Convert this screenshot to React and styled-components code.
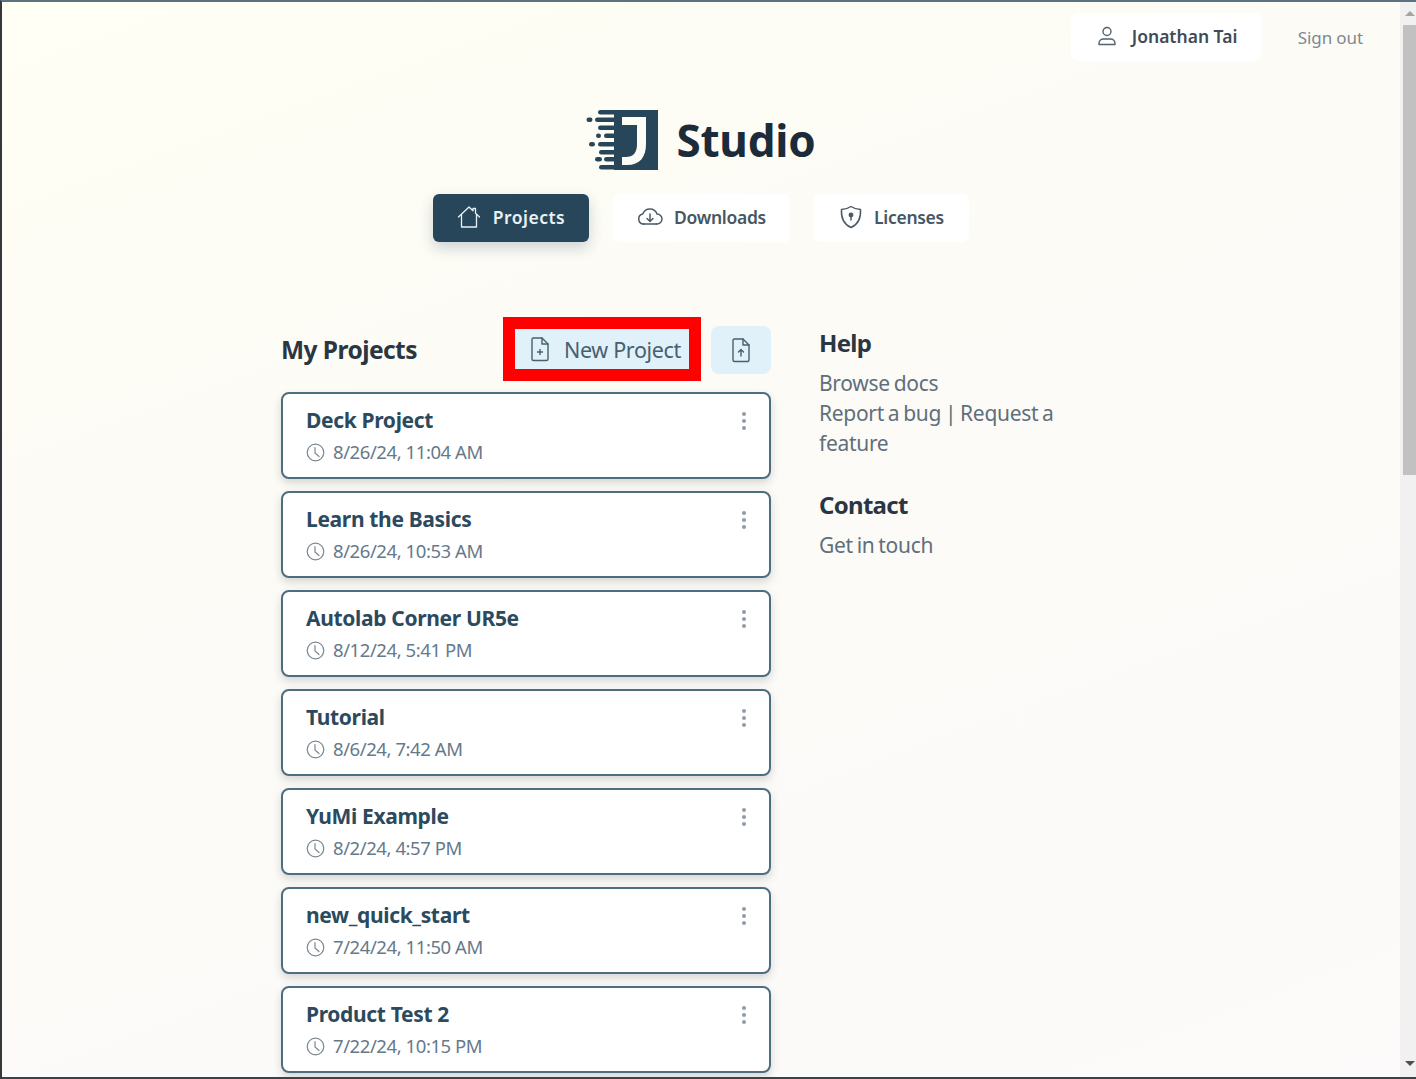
import React from "react";
import styled, { createGlobalStyle } from "styled-components";

const Global = createGlobalStyle`
  html, body { margin: 0; padding: 0; height: 100%; overflow: hidden; }
  body { font-family: "Noto Sans", "Open Sans", sans-serif; }
  * { box-sizing: border-box; }
`;
const Frame = styled.div`
  width: 1416px; height: 1079px; display: flex; overflow: hidden;
  border-top: 2px solid #5d7280; border-bottom: 2px solid #3c4246; border-left: 2px solid #33383b;
`;
const Page = styled.main`
  flex: 1; min-width: 0; overflow: hidden;
  background: linear-gradient(160deg, #fffff4 0%, #fcfbf6 35%, #fcfafa 100%);
`;
const Scrollbar = styled.div`
  width: 16px; background: #f1f1f1; display: flex; flex-direction: column; align-items: center; padding-left: 3px;
`;
const Arrow = styled.div`
  height: ${p => p.$down ? "21px" : "23px"}; width: 100%; display: flex; align-items: center; justify-content: center;
  &::before { content: ""; border-left: 5px solid transparent; border-right: 5px solid transparent;
    ${p => p.$down ? "border-top: 5px solid #505050; margin-bottom: 6px;" : "border-bottom: 5px solid #a3a3a3;"} }
`;
const Thumb = styled.div` width: 100%; height: 450px; background: #c1c1c1; `;
const Spacer = styled.div` flex: 1; `;
const TopBar = styled.header`
  display: flex; justify-content: flex-end; align-items: center; gap: 36px;
  padding: 10px 37px 0 0; height: 60px;
`;
const UserChip = styled.div`
  width: 191px; height: 48px; background: #fff; border-radius: 6px; display: flex; align-items: center; gap: 15px;
  padding: 0 0 2px 26px; color: #3f4b57; font-size: 17.5px; font-weight: 600; letter-spacing: 0;
`;
const SignOut = styled.a` color: #7c8894; font-size: 17px; letter-spacing: -0.1px; `;
const Brand = styled.div`
  display: flex; align-items: center; justify-content: center; gap: 16px; margin-top: 47px; height: 62px;
`;
const BrandName = styled.h1`
  margin: 0; color: #1c2b3a; font-size: 44px; font-weight: 700; letter-spacing: -0.2px; line-height: 62px;
`;
const Nav = styled.nav`
  display: flex; justify-content: center; gap: 24px; margin-top: 23px;
`;
const NavButton = styled.a`
  height: 48px; width: ${p => p.$w}px; border-radius: 6px; display: flex; align-items: center; justify-content: center; gap: ${p => p.$active ? 12 : 11}px;
  padding-bottom: 2px; font-size: 17.5px; font-weight: 600; letter-spacing: ${p => p.$active ? "0.5px" : "-0.3px"};
  background: ${p => p.$active ? "#27465a" : "#fff"}; color: ${p => p.$active ? "#e9f1f7" : "#465663"};
  box-shadow: ${p => p.$active ? "0 6px 14px rgba(39,70,90,.22)" : "none"};
`;
const Content = styled.div`
  display: grid; grid-template-columns: 490px 240px; column-gap: 48px; margin: 76px 0 0 279px;
`;
const Head = styled.div`
  display: flex; align-items: center; height: 74px; padding-bottom: 12px;
`;
const HeadTitle = styled.h2`
  margin: 0; color: #2a3642; font-size: 24.5px; font-weight: 700; letter-spacing: -0.55px; flex: 1;
`;
const NewButton = styled.button`
  width: 174px; height: 40px; border: none; padding: 0 0 0 14px; margin-right: 22px; background: #e0f1f9; display: flex; align-items: center; gap: 13px;
  color: #47606f; font: 400 21.5px "Noto Sans", sans-serif; letter-spacing: -0.35px;
  outline: 12px solid #ff0000;
`;
const UploadButton = styled.button`
  width: 60px; height: 48px; margin-top: 2px; border: none; border-radius: 8px; background: #e0f1f9; display: flex; align-items: center; justify-content: center; padding: 0;
`;
const List = styled.div` display: flex; flex-direction: column; gap: 12px; `;
const Card = styled.article`
  height: 87px; background: #fff; border: 2px solid #4d6d80; border-radius: 8px; position: relative;
  padding: 12px 0 0 23px; box-shadow: 0 4px 8px rgba(60,70,70,.2);
`;
const CardTitle = styled.div`
  color: #2c4a5e; font-size: 21px; font-weight: 700; letter-spacing: -0.34px; line-height: 29px;
`;
const CardDate = styled.div`
  display: flex; align-items: center; gap: 8px; margin-top: 2px; color: #66798a; font-size: 18.5px; letter-spacing: -0.43px; line-height: 29px;
  & svg { margin-top: 2px; }
`;
const Kebab = styled.span`
  position: absolute; right: 23px; top: 18px; display: flex; flex-direction: column; gap: 3px;
  & i { display: block; width: 4px; height: 4px; border-radius: 50%; background: #929ca6; }
`;
const Side = styled.aside` padding-top: 9px; `;
const SideTitle = styled.h3`
  margin: 0; color: #2a3642; font-size: 24px; font-weight: 700; letter-spacing: -0.7px; line-height: 32px;
  margin-top: ${p => p.$gap || 0}px;
`;
const SideText = styled.p`
  margin: 9px 0 0; color: #5f6f7b; font-size: 21px; line-height: 30px; letter-spacing: -0.3px; word-spacing: -1.3px;
`;

const Stroke = styled.svg` flex: none; display: block; `;

const HomeIcon = () => (
  <Stroke width="24" height="24" viewBox="0 0 24 24" fill="none" stroke="currentColor" strokeWidth="1.3" strokeLinejoin="round" strokeLinecap="round">
    <path d="M1.5 12 12 2l4 3.8V3.5h2.500v4.700l4 3.800" /><path d="M4.5 9.500V22h15V9.500" />
  </Stroke>
);
const CloudIcon = () => (
  <Stroke width="26" height="24" viewBox="0 0 26 24" fill="none" stroke="#4d5a65" strokeWidth="1.5" strokeLinecap="round" strokeLinejoin="round">
    <path d="M7 19H6.500a5 5 0 0 1-.7-9.900A7.500 7.500 0 0 1 20 9a5 5 0 0 1 0 10h-1" />
    <path d="M6.500 19h13" /><path d="M13 9v7M10 13.500l3 3 3-3" />
  </Stroke>
);
const ShieldIcon = () => (
  <Stroke width="24" height="26" viewBox="0 0 24 26" fill="none" stroke="#4d5a65" strokeWidth="1.5" strokeLinecap="round" strokeLinejoin="round">
    <path d="M12 2.500c3 2 6 3 9.500 3 .5 8-1.500 14.500-9.500 18-8-3.500-10-10-9.500-18 3.500 0 6.500-1 9.500-3z" />
    <circle cx="12" cy="11" r="1.700" fill="#4d5a65" /><path d="M12 12v4" />
  </Stroke>
);
const UserIcon = () => (
  <Stroke width="20" height="20" viewBox="0 0 20 20" fill="none" stroke="#55616c" strokeWidth="1.4">
    <circle cx="10" cy="5.500" r="4" /><path d="M2 18.500v-1.200c0-2.300 2-4.300 4.500-4.300h7c2.500 0 4.500 2 4.500 4.300v1.200z" strokeLinejoin="round" />
  </Stroke>
);
const FileIcon = ({ up }) => (
  <Stroke width="22" height="26" viewBox="0 0 22 26" fill="none" stroke="#47606f" strokeWidth="1.4" strokeLinecap="round" strokeLinejoin="round">
    <path d="M3 3.500A1.500 1.500 0 0 1 4.500 2H13l6 6v15a1.500 1.500 0 0 1-1.500 1.500h-13A1.500 1.500 0 0 1 3 23z" />
    <path d="M13 2v6h6" />
    {up ? <path d="M11 19v-6.500M8.500 15l2.500-2.500 2.500 2.500" /> : <path d="M11 13.500v5M8.500 16h5" />}
  </Stroke>
);
const ClockIcon = () => (
  <Stroke width="19" height="19" viewBox="0 0 19 19" fill="none" stroke="#7a8892" strokeWidth="1.2" strokeLinecap="round">
    <circle cx="9.500" cy="9.500" r="8.300" /><path d="M9 4.500v5.500l4 3.500" />
  </Stroke>
);
const logoRows = [
  [12, 1, 22], [0.5, 8.5, 6], [9, 8.5, 25], [12, 16.5, 22], [10, 24.500, 5], [18, 24.500, 16],
  [3, 33, 6], [12, 33, 22], [13, 41, 21], [9, 48, 7], [18, 48, 16], [13, 56, 21],
];
const Logo = () => (
  <Stroke width="74" height="62" viewBox="0 0 74 62">
    <rect x="28" y="1" width="44" height="60" fill="#27465a" />
    {logoRows.map(([x, y, w], i) => (
      <rect key={i} x={x} y={y} width={w} height="4.600" rx="2.300" fill="#27465a" />
    ))}
    <path d="M36 8h24v27c0 13-6 21-19 21h-5v-8h4c7 0 11-4 11-13V16H36z" fill="#fdfcf5" />
  </Stroke>
);

const projects = [
  ["Deck Project", "8/26/24, 11:04 AM"],
  ["Learn the Basics", "8/26/24, 10:53 AM"],
  ["Autolab Corner UR5e", "8/12/24, 5:41 PM"],
  ["Tutorial", "8/6/24, 7:42 AM"],
  ["YuMi Example", "8/2/24, 4:57 PM"],
  ["new_quick_start", "7/24/24, 11:50 AM"],
  ["Product Test 2", "7/22/24, 10:15 PM"],
];

export default function App() {
  return (
    <>
      <Global />
      <Frame>
        <Page>
          <TopBar>
            <UserChip><UserIcon />Jonathan Tai</UserChip>
            <SignOut>Sign out</SignOut>
          </TopBar>
          <Brand><Logo /><BrandName>Studio</BrandName></Brand>
          <Nav>
            <NavButton $active $w={156}><HomeIcon />Projects</NavButton>
            <NavButton $w={177}><CloudIcon />Downloads</NavButton>
            <NavButton $w={155}><ShieldIcon />Licenses</NavButton>
          </Nav>
          <Content>
            <div>
              <Head>
                <HeadTitle>My Projects</HeadTitle>
                <NewButton><FileIcon />New Project</NewButton>
                <UploadButton><FileIcon up /></UploadButton>
              </Head>
              <List>
                {projects.map(([t, d]) => (
                  <Card key={t}>
                    <CardTitle>{t}</CardTitle>
                    <CardDate><ClockIcon />{d}</CardDate>
                    <Kebab><i /><i /><i /></Kebab>
                  </Card>
                ))}
              </List>
            </div>
            <Side>
              <SideTitle>Help</SideTitle>
              <SideText>Browse docs<br />Report a bug | Request a feature</SideText>
              <SideTitle $gap={31}>Contact</SideTitle>
              <SideText>Get in touch</SideText>
            </Side>
          </Content>
        </Page>
        <Scrollbar>
          <Arrow />
          <Thumb />
          <Spacer />
          <Arrow $down />
        </Scrollbar>
      </Frame>
    </>
  );
}
